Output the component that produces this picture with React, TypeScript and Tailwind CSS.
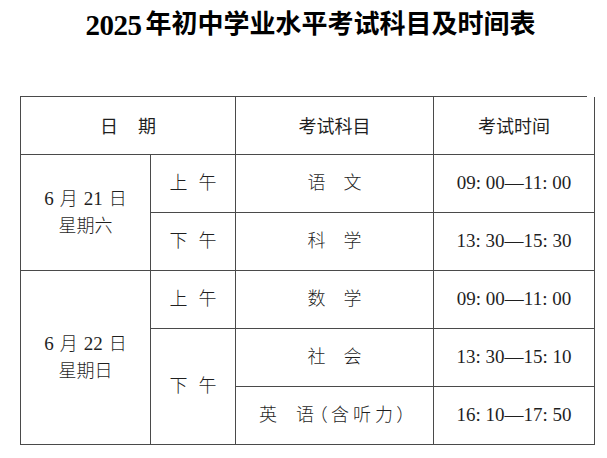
const serif = "font-['Liberation_Serif','Noto_Sans_CJK_SC',serif]"
const sans = "font-['Noto_Sans_CJK_SC',sans-serif]"

const cell = 'border-r border-b border-[#4a4a4a] flex items-center justify-center'

function Pair({ a, b, gap }: { a: string; b: string; gap: string }) {
  return (
    <div className={`flex ${gap}`}>
      <span>{a}</span>
      <span>{b}</span>
    </div>
  )
}

function DateCell({ day, week, span }: { day: string; week: string; span: string }) {
  return (
    <div className={`${cell} ${span} flex-col gap-[7px] leading-[20px]`}>
      <div className="flex items-baseline gap-[6px]">
        <span className="text-[19px]">6</span>
        <span className="font-light">月</span>
        <span className="text-[19px]">{day}</span>
        <span className="font-light">日</span>
      </div>
      <div className="font-light">{week}</div>
    </div>
  )
}

export default function App() {
  return (
    <div className={`w-[607px] h-[458px] bg-white text-[#1f1f1f] ${serif}`}>
      <h1 className="h-[46px] pt-[4px] pl-[14px] flex items-center justify-center font-bold text-black">
        <span className="text-[29px] leading-none mr-[4px] tracking-[-0.5px]">2025</span>
        <span className="text-[26px] leading-none">年初中学业水平考试科目及时间表</span>
      </h1>

      <div className="pt-[50px] px-[20px]">
        <div className="grid grid-cols-[130px_85px_198px_161px] grid-rows-[58px_58px_58px_58px_58px_58px] border-l border-t border-[#4a4a4a] text-[18px]">
          <div className={`${cell} col-span-2 ${sans}`}>
            <Pair a="日" b="期" gap="gap-[20px]" />
          </div>
          <div className={`${cell} ${sans}`}>考试科目</div>
          <div className={`${cell} ${sans}`}>考试时间</div>

          <DateCell day="21" week="星期六" span="row-span-2" />
          <div className={`${cell} font-light`}><Pair a="上" b="午" gap="gap-[11px]" /></div>
          <div className={`${cell} font-light`}><Pair a="语" b="文" gap="gap-[18px]" /></div>
          <div className={`${cell} text-[19px]`}>09: 00—11: 00</div>

          <div className={`${cell} font-light`}><Pair a="下" b="午" gap="gap-[11px]" /></div>
          <div className={`${cell} font-light`}><Pair a="科" b="学" gap="gap-[18px]" /></div>
          <div className={`${cell} text-[19px]`}>13: 30—15: 30</div>

          <DateCell day="22" week="星期日" span="row-span-3" />
          <div className={`${cell} font-light`}><Pair a="上" b="午" gap="gap-[11px]" /></div>
          <div className={`${cell} font-light`}><Pair a="数" b="学" gap="gap-[18px]" /></div>
          <div className={`${cell} text-[19px]`}>09: 00—11: 00</div>

          <div className={`${cell} row-span-2 font-light`}><Pair a="下" b="午" gap="gap-[11px]" /></div>
          <div className={`${cell} font-light`}><Pair a="社" b="会" gap="gap-[18px]" /></div>
          <div className={`${cell} text-[19px]`}>13: 30—15: 10</div>

          <div className={`${cell} font-light [font-feature-settings:'palt']`}>
            <span className="mr-[19px]">英</span>
            <span className="tracking-[4px]">语（含听力）</span>
          </div>
          <div className={`${cell} text-[19px]`}>16: 10—17: 50</div>
        </div>
      </div>
    </div>
  )
}
